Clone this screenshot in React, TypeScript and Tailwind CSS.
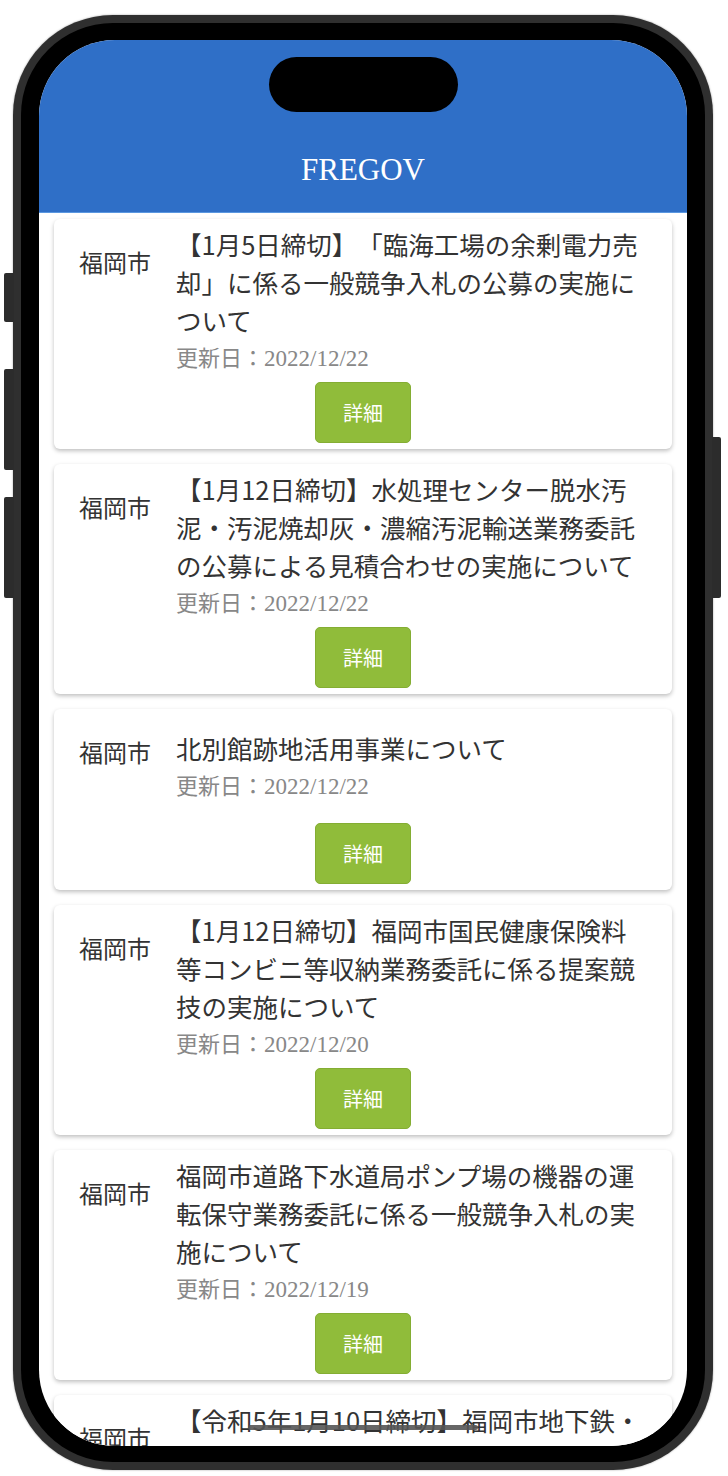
import React from "react";

type Item = { title: string; date: string };

const items: Item[] = [
  { title: "【1月5日締切】「臨海工場の余剰電力売却」に係る一般競争入札の公募の実施について", date: "2022/12/22" },
  { title: "【1月12日締切】水処理センター脱水汚泥・汚泥焼却灰・濃縮汚泥輸送業務委託の公募による見積合わせの実施について", date: "2022/12/22" },
  { title: "北別館跡地活用事業について", date: "2022/12/22" },
  { title: "【1月12日締切】福岡市国民健康保険料等コンビニ等収納業務委託に係る提案競技の実施について", date: "2022/12/20" },
  { title: "福岡市道路下水道局ポンプ場の機器の運転保守業務委託に係る一般競争入札の実施について", date: "2022/12/19" },
  { title: "【令和5年1月10日締切】福岡市地下鉄・七隈線延伸区間の運行管理業務委託について", date: "2022/12/19" },
];

function Card({ item }: { item: Item }) {
  return (
    <div className="flex shrink-0 flex-col rounded-[6px] bg-white pb-[6px] pt-[6px] shadow-[0_2px_4px_rgba(0,0,0,0.25)]">
      <div className="flex">
        <div className="w-[122px] shrink-0 pl-[25px] pt-[22px] text-[24px] leading-[30px] text-[#333]">福岡市</div>
        <div className="flex min-h-[99px] w-[470px] flex-col justify-center">
          <div className="text-[25.5px] leading-[38px] text-[#333]">{item.title}</div>
          <div className="h-[34px] text-[22px] leading-[34px] text-[#888]">
            更新日：
            <span
              className="text-[23px] leading-[0]"
              style={{ fontFamily: '"Liberation Serif", serif' }}
            >
              {item.date}
            </span>
          </div>
        </div>
      </div>
      <button className="mt-[9px] flex h-[61px] w-[96px] items-center justify-center self-center rounded-[5px] border border-[#84ad33] bg-[#90bc3a] text-[20px] text-white">
        詳細
      </button>
    </div>
  );
}

export default function App() {
  return (
    <div
      className="relative h-[1476px] w-[728px] overflow-hidden bg-white"
      style={{
        fontFamily: '"Noto Sans CJK JP", "Noto Sans", sans-serif',
        textSpacingTrim: "space-all",
      } as React.CSSProperties}
    >
      {/* side buttons */}
      <div className="absolute left-[4px] top-[273px] h-[49px] w-[10px] rounded-l-[2px] bg-[#2c2c2c]" />
      <div className="absolute left-[4px] top-[369px] h-[101px] w-[10px] rounded-l-[2px] bg-[#2c2c2c]" />
      <div className="absolute left-[4px] top-[497px] h-[101px] w-[10px] rounded-l-[2px] bg-[#2c2c2c]" />
      <div className="absolute left-[712px] top-[437px] h-[161px] w-[9px] rounded-r-[2px] bg-[#2c2c2c]" />

      {/* phone body */}
      <div className="ml-[13px] mt-[15px] h-[1455px] w-[700px] rounded-[100px] bg-[#2f2f2f] p-[8px] shadow-[0_0_2px_rgba(0,0,0,0.4)]">
        <div className="h-full w-full rounded-[92px] bg-black pb-[16px] pl-[18px] pr-[18px] pt-[17px]">
          <div className="relative h-full w-full overflow-hidden rounded-[76px] bg-white">
            <div className="flex h-[173px] items-end justify-center border-b border-[#5a97e0] bg-[#2f6fc7] pb-[24px]">
              <span
                className="text-[31px] leading-[36px] text-white"
                style={{ fontFamily: '"Liberation Serif", serif' }}
              >
                FREGOV
              </span>
            </div>
            <div className="flex flex-col gap-[15px] px-[15px] pt-[6px]">
              {items.map((it, i) => (
                <Card key={i} item={it} />
              ))}
            </div>

            {/* dynamic island */}
            <div className="absolute left-[230px] top-[17px] h-[55px] w-[189px] rounded-full bg-black" />
            {/* home indicator */}
            <div className="absolute bottom-[16px] left-[209px] h-[5px] w-[230px] rounded-full bg-[#555]/90" />
          </div>
        </div>
      </div>
    </div>
  );
}
